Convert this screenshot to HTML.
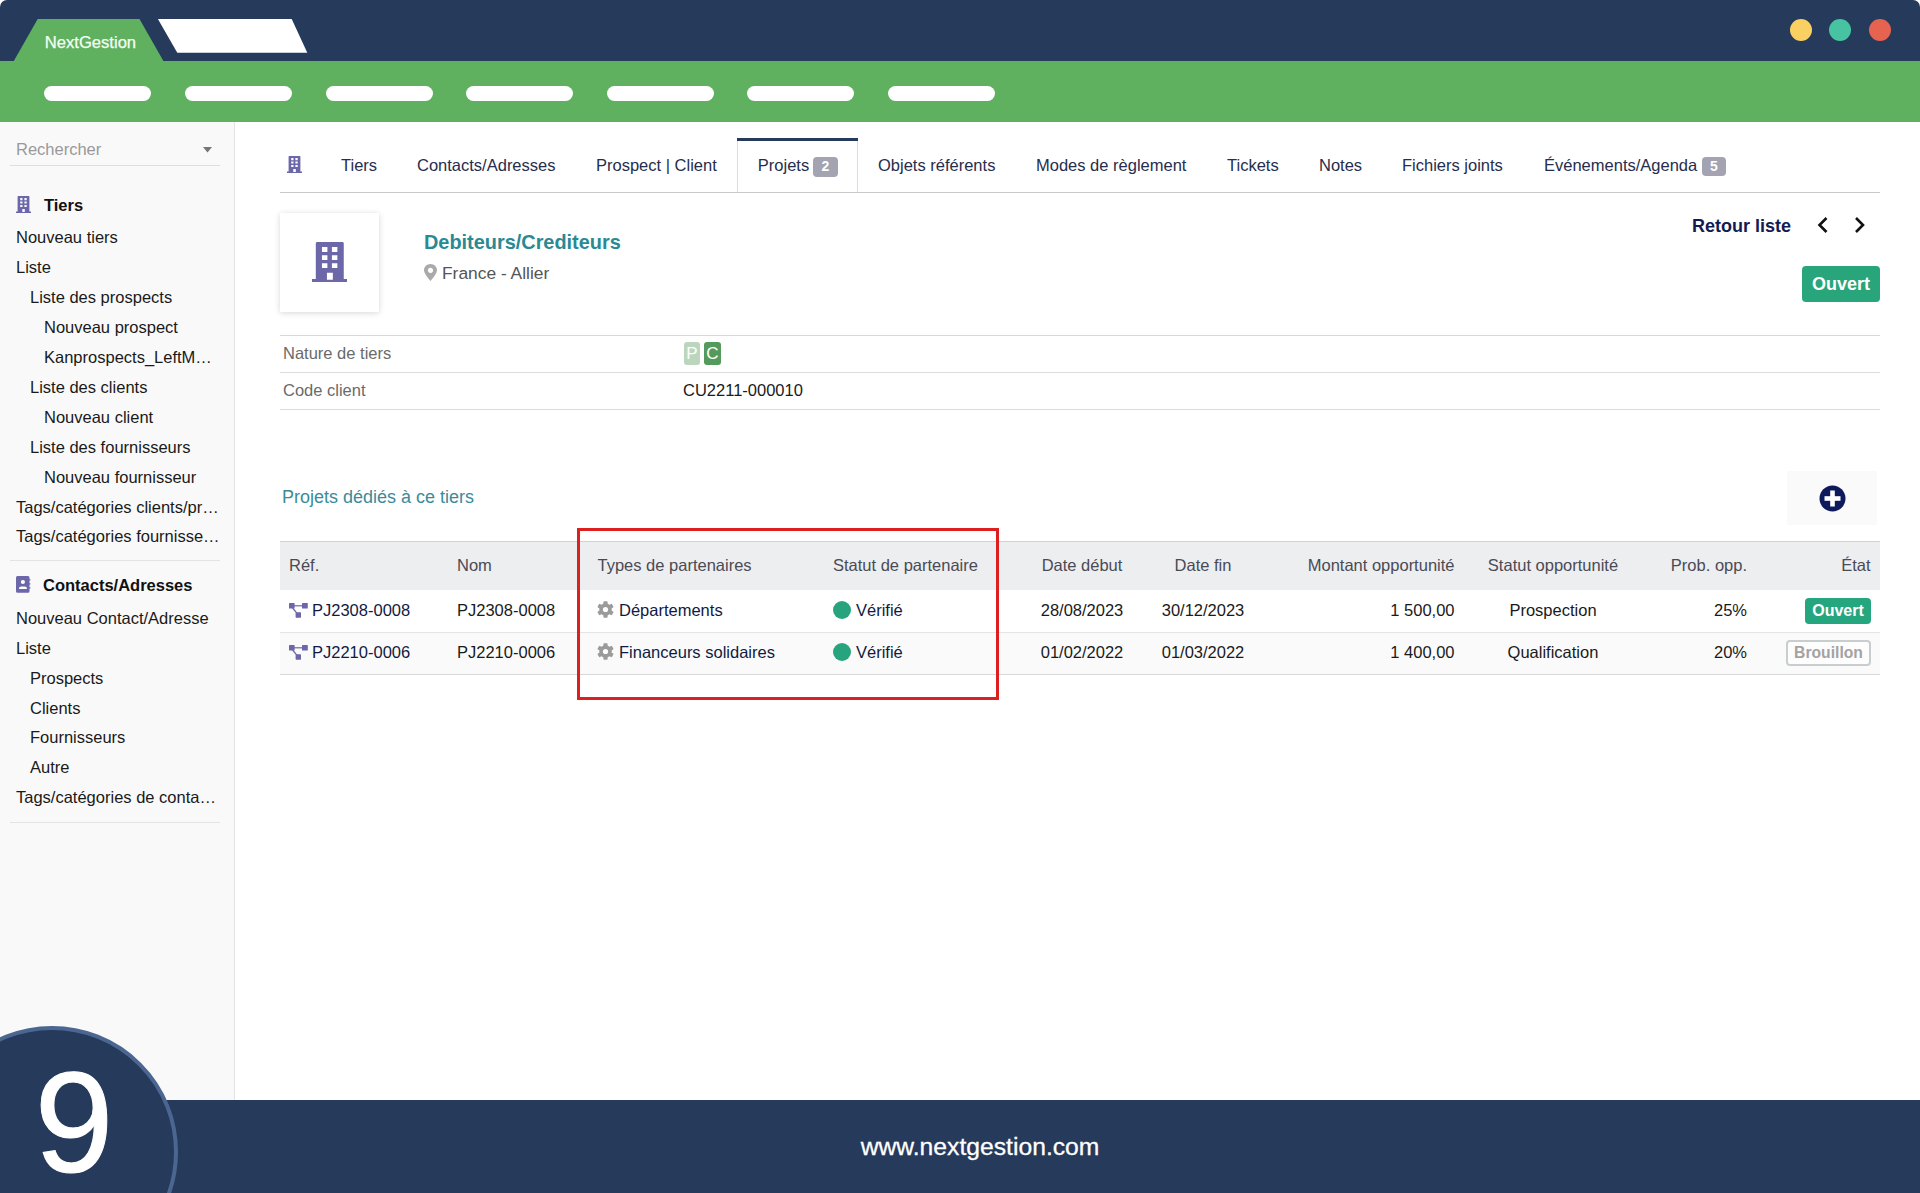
<!DOCTYPE html>
<html><head><meta charset='utf-8'><style>
html,body{margin:0;padding:0;width:1920px;height:1193px;overflow:hidden;background:#fff;position:relative}
.t{position:absolute;white-space:nowrap;line-height:1;font-family:'Liberation Sans', sans-serif}
</style></head><body>
<div style='position:absolute;left:0px;top:0px;width:1920px;height:61px;background:#263a5c;border-radius:7px 7px 0 0'></div>
<svg style='position:absolute;left:0;top:0' width='400' height='62'><polygon points='37.7,18.9 139.5,18.9 163.4,61 13.8,61' fill='#5fb160'/><polygon points='157.9,18.9 291.7,18.9 307.3,52.8 177.3,52.8' fill='#fff'/></svg>
<div class='t' style='left:44.8px;top:34.95px;font-size:16.6px;color:#f4fff4;font-weight:400;-webkit-text-stroke:0.25px #f4fff4'>NextGestion</div>
<div style='position:absolute;left:1789.6px;top:18.8px;width:22.4px;height:22.4px;background:#fbd062;border-radius:50%'></div>
<div style='position:absolute;left:1828.8px;top:18.8px;width:22.4px;height:22.4px;background:#47c3a2;border-radius:50%'></div>
<div style='position:absolute;left:1868.8px;top:18.8px;width:22.4px;height:22.4px;background:#e5634f;border-radius:50%'></div>
<div style='position:absolute;left:0px;top:61px;width:1920px;height:61px;background:#5fb160'></div>
<div style='position:absolute;left:44px;top:86px;width:107px;height:15px;background:#fff;border-radius:8px'></div>
<div style='position:absolute;left:185px;top:86px;width:107px;height:15px;background:#fff;border-radius:8px'></div>
<div style='position:absolute;left:326px;top:86px;width:107px;height:15px;background:#fff;border-radius:8px'></div>
<div style='position:absolute;left:466px;top:86px;width:107px;height:15px;background:#fff;border-radius:8px'></div>
<div style='position:absolute;left:607px;top:86px;width:107px;height:15px;background:#fff;border-radius:8px'></div>
<div style='position:absolute;left:747px;top:86px;width:107px;height:15px;background:#fff;border-radius:8px'></div>
<div style='position:absolute;left:888px;top:86px;width:107px;height:15px;background:#fff;border-radius:8px'></div>
<div style='position:absolute;left:0px;top:122px;width:234px;height:978px;background:#f9f9f9'></div>
<div style='position:absolute;left:234px;top:122px;width:1px;height:978px;background:#e3e3e3'></div>
<div class='t' style='left:16px;top:140.73px;font-size:16.5px;color:#9a9a9a;font-weight:400;'>Rechercher</div>
<svg style='position:absolute;left:203px;top:147px' width='10' height='6'><polygon points='0,0 9,0 4.5,5.5' fill='#777'/></svg>
<div style='position:absolute;left:10px;top:165px;width:210px;height:1px;background:#dedede'></div>
<svg style='position:absolute;left:15.8px;top:196px' width='15' height='17' viewBox='0 0 15 17'><path fill='#6b67a8' d='M1.6,0.6 Q1.6,0 2.2,0 L12.8,0 Q13.4,0 13.4,0.6 L13.4,15.6 L15,15.6 L15,16.9 L0,16.9 L0,15.6 L1.6,15.6 Z M4.2,2.1 L4.2,4.2 L6.5,4.2 L6.5,2.1 Z M8.4,2.1 L8.4,4.2 L10.7,4.2 L10.7,2.1 Z M4.2,5.6 L4.2,7.6 L6.5,7.6 L6.5,5.6 Z M8.4,5.6 L8.4,7.6 L10.7,7.6 L10.7,5.6 Z M4.2,9 L4.2,11 L6.5,11 L6.5,9 Z M8.4,9 L8.4,11 L10.7,11 L10.7,9 Z M6.3,13 L6.3,15.9 L8.8,15.9 L8.8,13 Z'/></svg>
<div class='t' style='left:44px;top:196.63px;font-size:16.5px;color:#111;font-weight:700;'>Tiers</div>
<div class='t' style='left:16px;top:229.03px;font-size:16.5px;color:#1a1a1a;font-weight:400;'>Nouveau tiers</div>
<div class='t' style='left:16px;top:259.03px;font-size:16.5px;color:#1a1a1a;font-weight:400;'>Liste</div>
<div class='t' style='left:30px;top:289.03px;font-size:16.5px;color:#1a1a1a;font-weight:400;'>Liste des prospects</div>
<div class='t' style='left:44px;top:319.03px;font-size:16.5px;color:#1a1a1a;font-weight:400;'>Nouveau prospect</div>
<div class='t' style='left:44px;top:349.03px;font-size:16.5px;color:#1a1a1a;font-weight:400;'>Kanprospects_LeftM…</div>
<div class='t' style='left:30px;top:379.03px;font-size:16.5px;color:#1a1a1a;font-weight:400;'>Liste des clients</div>
<div class='t' style='left:44px;top:409.03px;font-size:16.5px;color:#1a1a1a;font-weight:400;'>Nouveau client</div>
<div class='t' style='left:30px;top:439.03px;font-size:16.5px;color:#1a1a1a;font-weight:400;'>Liste des fournisseurs</div>
<div class='t' style='left:44px;top:469.03px;font-size:16.5px;color:#1a1a1a;font-weight:400;'>Nouveau fournisseur</div>
<div class='t' style='left:16px;top:499.03px;font-size:16.5px;color:#1a1a1a;font-weight:400;'>Tags/catégories clients/pr…</div>
<div class='t' style='left:16px;top:528.03px;font-size:16.5px;color:#1a1a1a;font-weight:400;'>Tags/catégories fournisse…</div>
<div style='position:absolute;left:10px;top:560px;width:210px;height:1px;background:#e3e3e3'></div>
<svg style='position:absolute;left:16px;top:576px' width='15' height='17' viewBox='0 0 15 17'><path fill='#6b67a8' d='M1.5,0 L12,0 Q13.5,0 13.5,1.5 L13.5,3.2 L14.4,3.2 L14.4,4.6 L13.5,4.6 L13.5,7.2 L14.4,7.2 L14.4,8.6 L13.5,8.6 L13.5,11.2 L14.4,11.2 L14.4,12.6 L13.5,12.6 L13.5,15.3 Q13.5,16.8 12,16.8 L1.5,16.8 Q0,16.8 0,15.3 L0,1.5 Q0,0 1.5,0 Z'/><circle cx='6.9' cy='6' r='2.1' fill='#fff'/><path d='M3,13.1 L3,12.3 Q3,10.4 5.2,10.4 L8.7,10.4 Q10.9,10.4 10.9,12.3 L10.9,13.1 Z' fill='#fff'/></svg>
<div class='t' style='left:43px;top:577.03px;font-size:16.5px;color:#111;font-weight:700;'>Contacts/Adresses</div>
<div class='t' style='left:16px;top:610.43px;font-size:16.5px;color:#1a1a1a;font-weight:400;'>Nouveau Contact/Adresse</div>
<div class='t' style='left:16px;top:640.13px;font-size:16.5px;color:#1a1a1a;font-weight:400;'>Liste</div>
<div class='t' style='left:30px;top:669.83px;font-size:16.5px;color:#1a1a1a;font-weight:400;'>Prospects</div>
<div class='t' style='left:30px;top:699.53px;font-size:16.5px;color:#1a1a1a;font-weight:400;'>Clients</div>
<div class='t' style='left:30px;top:729.23px;font-size:16.5px;color:#1a1a1a;font-weight:400;'>Fournisseurs</div>
<div class='t' style='left:30px;top:758.93px;font-size:16.5px;color:#1a1a1a;font-weight:400;'>Autre</div>
<div class='t' style='left:16px;top:788.63px;font-size:16.5px;color:#1a1a1a;font-weight:400;'>Tags/catégories de conta…</div>
<div style='position:absolute;left:10px;top:822px;width:210px;height:1px;background:#e3e3e3'></div>
<div style='position:absolute;left:737px;top:139px;width:121px;height:54px;background:#fff;border-left:1px solid #dcdcdc;border-right:1px solid #dcdcdc;box-sizing:border-box'></div>
<div style='position:absolute;left:737px;top:138px;width:121px;height:3px;background:#263a5c'></div>
<svg style='position:absolute;left:286.8px;top:156px' width='15.0' height='17.0' viewBox='0 0 15 17'><path fill='#6b67a8' d='M1.6,0.6 Q1.6,0 2.2,0 L12.8,0 Q13.4,0 13.4,0.6 L13.4,15.6 L15,15.6 L15,16.9 L0,16.9 L0,15.6 L1.6,15.6 Z M4.2,2.1 L4.2,4.2 L6.5,4.2 L6.5,2.1 Z M8.4,2.1 L8.4,4.2 L10.7,4.2 L10.7,2.1 Z M4.2,5.6 L4.2,7.6 L6.5,7.6 L6.5,5.6 Z M8.4,5.6 L8.4,7.6 L10.7,7.6 L10.7,5.6 Z M4.2,9 L4.2,11 L6.5,11 L6.5,9 Z M8.4,9 L8.4,11 L10.7,11 L10.7,9 Z M6.3,13 L6.3,15.9 L8.8,15.9 L8.8,13 Z'/></svg>
<div class='t' style='left:341px;top:156.83px;font-size:16.5px;color:#262d4d;font-weight:400;'>Tiers</div>
<div class='t' style='left:417px;top:156.83px;font-size:16.5px;color:#262d4d;font-weight:400;'>Contacts/Adresses</div>
<div class='t' style='left:596px;top:156.83px;font-size:16.5px;color:#262d4d;font-weight:400;'>Prospect | Client</div>
<div class='t' style='left:757.8px;top:156.83px;font-size:16.5px;color:#262d4d;font-weight:400;'>Projets</div>
<div class='t' style='left:878px;top:156.83px;font-size:16.5px;color:#262d4d;font-weight:400;'>Objets référents</div>
<div class='t' style='left:1036px;top:156.83px;font-size:16.5px;color:#262d4d;font-weight:400;'>Modes de règlement</div>
<div class='t' style='left:1227px;top:156.83px;font-size:16.5px;color:#262d4d;font-weight:400;'>Tickets</div>
<div class='t' style='left:1319px;top:156.83px;font-size:16.5px;color:#262d4d;font-weight:400;'>Notes</div>
<div class='t' style='left:1402px;top:156.83px;font-size:16.5px;color:#262d4d;font-weight:400;'>Fichiers joints</div>
<div class='t' style='left:1544px;top:156.83px;font-size:16.5px;color:#262d4d;font-weight:400;'>Événements/Agenda</div>
<div style='position:absolute;left:280px;top:192px;width:1600px;height:1px;background:#c9c9c9'></div>
<div style='position:absolute;left:813px;top:157px;width:25px;height:19.5px;background:#a3a3b2;border-radius:4px'></div>
<div class='t' style='left:813px;width:25px;text-align:center;top:158px;font-size:14px;line-height:17px;color:#fff;font-weight:700'>2</div>
<div style='position:absolute;left:1702px;top:157px;width:24px;height:19px;background:#a3a3b2;border-radius:4px'></div>
<div class='t' style='left:1702px;width:24px;text-align:center;top:158px;font-size:14px;line-height:17px;color:#fff;font-weight:700'>5</div>
<div style='position:absolute;left:280px;top:213px;width:99px;height:99px;background:#fff;box-shadow:0 1px 6px rgba(0,0,0,0.16)'></div>
<svg style='position:absolute;left:311.7px;top:242.1px' width='35.550000000000004' height='40.29' viewBox='0 0 15 17'><path fill='#6b67a8' d='M1.6,0.6 Q1.6,0 2.2,0 L12.8,0 Q13.4,0 13.4,0.6 L13.4,15.6 L15,15.6 L15,16.9 L0,16.9 L0,15.6 L1.6,15.6 Z M4.2,2.1 L4.2,4.2 L6.5,4.2 L6.5,2.1 Z M8.4,2.1 L8.4,4.2 L10.7,4.2 L10.7,2.1 Z M4.2,5.6 L4.2,7.6 L6.5,7.6 L6.5,5.6 Z M8.4,5.6 L8.4,7.6 L10.7,7.6 L10.7,5.6 Z M4.2,9 L4.2,11 L6.5,11 L6.5,9 Z M8.4,9 L8.4,11 L10.7,11 L10.7,9 Z M6.3,13 L6.3,15.9 L8.8,15.9 L8.8,13 Z'/></svg>
<div class='t' style='left:424px;top:232.95px;font-size:19.9px;color:#2a8a93;font-weight:700;'>Debiteurs/Crediteurs</div>
<svg style='position:absolute;left:423.8px;top:264px' width='13' height='17' viewBox='0 0 13 17'><path fill='#aaa' d='M6.5,0 C2.9,0 0,2.8 0,6.3 C0,10 6.5,17 6.5,17 C6.5,17 13,10 13,6.3 C13,2.8 10.1,0 6.5,0 Z M6.5,3.8 A2.6,2.6 0 1 1 6.49,3.8 Z'/></svg>
<div class='t' style='left:442px;top:264.77px;font-size:17.4px;color:#555;font-weight:400;'>France - Allier</div>
<div class='t' style='left:1692px;top:217.36px;font-size:18px;color:#141b52;font-weight:700;'>Retour liste</div>
<svg style='position:absolute;left:1815px;top:215px' width='56' height='20'><path d='M11.5,3 L4.5,10 L11.5,17' stroke='#111' stroke-width='2.6' fill='none'/><path d='M41,3 L48,10 L41,17' stroke='#111' stroke-width='2.6' fill='none'/></svg>
<div style='position:absolute;left:1802px;top:266px;width:78px;height:36px;background:#28a57b;border-radius:4px'></div>
<div class='t' style='left:1811.9px;top:274.76px;font-size:18px;color:#fff;font-weight:700;'>Ouvert</div>
<div style='position:absolute;left:280px;top:335px;width:1600px;height:1px;background:#d8d8d8'></div>
<div class='t' style='left:283px;top:345.33px;font-size:16.5px;color:#6a6a6a;font-weight:400;'>Nature de tiers</div>
<div style='position:absolute;left:684px;top:342px;width:16px;height:23px;background:#bcd6be;border-radius:3px'></div>
<div style='position:absolute;left:704px;top:342px;width:17px;height:23px;background:#559a5d;border-radius:3px'></div>
<div class='t' style='left:684px;width:16px;text-align:center;top:342px;font-size:17px;line-height:23px;color:#fff'>P</div>
<div class='t' style='left:704px;width:17px;text-align:center;top:342px;font-size:17px;line-height:23px;color:#fff'>C</div>
<div style='position:absolute;left:280px;top:372px;width:1600px;height:1px;background:#dcdcdc'></div>
<div class='t' style='left:283px;top:382.03px;font-size:16.5px;color:#6a6a6a;font-weight:400;'>Code client</div>
<div class='t' style='left:683px;top:382.03px;font-size:16.5px;color:#1a1a1a;font-weight:400;'>CU2211-000010</div>
<div style='position:absolute;left:280px;top:409px;width:1600px;height:1px;background:#dcdcdc'></div>
<div class='t' style='left:282px;top:488.06px;font-size:18px;color:#3b8b99;font-weight:400;'>Projets dédiés à ce tiers</div>
<div style='position:absolute;left:1787px;top:471px;width:90px;height:54px;background:#fafafa'></div>
<svg style='position:absolute;left:1819px;top:485px' width='27' height='27' viewBox='0 0 27 27'><circle cx='13.5' cy='13.5' r='13' fill='#0e1a5c'/><rect x='11.2' y='5.5' width='4.6' height='16' fill='#fff'/><rect x='5.5' y='11.2' width='16' height='4.6' fill='#fff'/></svg>
<div style='position:absolute;left:280px;top:541px;width:1600px;height:1px;background:#d2d2d2'></div>
<div style='position:absolute;left:280px;top:542px;width:1600px;height:48px;background:#edeef0'></div>
<div style='position:absolute;left:280px;top:632px;width:1600px;height:1px;background:#e4e4e4'></div>
<div style='position:absolute;left:280px;top:633px;width:1600px;height:41px;background:#fafafa'></div>
<div style='position:absolute;left:280px;top:674px;width:1600px;height:1px;background:#d8d8d8'></div>
<div class='t' style='left:289px;top:557.28px;font-size:16.5px;color:#4a4a55;font-weight:400;'>Réf.</div>
<div class='t' style='left:457px;top:557.28px;font-size:16.5px;color:#4a4a55;font-weight:400;'>Nom</div>
<div class='t' style='left:597.5px;top:557.28px;font-size:16.5px;color:#4a4a55;font-weight:400;'>Types de partenaires</div>
<div class='t' style='left:833px;top:557.28px;font-size:16.5px;color:#4a4a55;font-weight:400;'>Statut de partenaire</div>
<div class='t' style='left:782px;width:600px;text-align:center;top:557.28px;font-size:16.5px;color:#4a4a55;font-weight:400;'>Date début</div>
<div class='t' style='left:903px;width:600px;text-align:center;top:557.28px;font-size:16.5px;color:#4a4a55;font-weight:400;'>Date fin</div>
<div class='t' style='right:465.5px;top:557.28px;font-size:16.5px;color:#4a4a55;font-weight:400;'>Montant opportunité</div>
<div class='t' style='left:1253px;width:600px;text-align:center;top:557.28px;font-size:16.5px;color:#4a4a55;font-weight:400;'>Statut opportunité</div>
<div class='t' style='right:173px;top:557.28px;font-size:16.5px;color:#4a4a55;font-weight:400;'>Prob. opp.</div>
<div class='t' style='right:49.5px;top:557.28px;font-size:16.5px;color:#4a4a55;font-weight:400;'>État</div>
<svg style='position:absolute;left:289px;top:603.0px' width='19' height='15' viewBox='0 0 19 15'><rect x='0' y='0' width='5.6' height='5.6' rx='0.6' fill='#6b67a8'/><rect x='13' y='0' width='5.8' height='5.6' rx='0.6' fill='#6b67a8'/><rect x='6.6' y='9.3' width='5.4' height='5.4' rx='0.6' fill='#6b67a8'/><rect x='5' y='2.2' width='8' height='1.2' fill='#6b67a8'/><path d='M3.6,5 L7.6,9.8' stroke='#6b67a8' stroke-width='1.3'/></svg>
<div class='t' style='left:312px;top:602.28px;font-size:16.5px;color:#111a44;font-weight:400;'>PJ2308-0008</div>
<div class='t' style='left:457px;top:602.28px;font-size:16.5px;color:#1a1a1a;font-weight:400;'>PJ2308-0008</div>
<svg style='position:absolute;left:596.5px;top:601.0px' width='17' height='17' viewBox='-8.5 -8.5 17 17'><g fill='#9b9b9b'><circle r='6.2'/><rect x='-2.1' y='-8.3' width='4.2' height='4' rx='0.8' transform='rotate(0)'/><rect x='-2.1' y='-8.3' width='4.2' height='4' rx='0.8' transform='rotate(60)'/><rect x='-2.1' y='-8.3' width='4.2' height='4' rx='0.8' transform='rotate(120)'/><rect x='-2.1' y='-8.3' width='4.2' height='4' rx='0.8' transform='rotate(180)'/><rect x='-2.1' y='-8.3' width='4.2' height='4' rx='0.8' transform='rotate(240)'/><rect x='-2.1' y='-8.3' width='4.2' height='4' rx='0.8' transform='rotate(300)'/></g><circle r='2.6' fill='#fff'/></svg>
<div class='t' style='left:619px;top:602.28px;font-size:16.5px;color:#111a44;font-weight:400;'>Départements</div>
<div style='position:absolute;left:832.8px;top:600.65px;width:18.4px;height:18.4px;background:#27a47d;border-radius:50%'></div>
<div class='t' style='left:856px;top:602.28px;font-size:16.5px;color:#111a44;font-weight:400;'>Vérifié</div>
<div class='t' style='left:782px;width:600px;text-align:center;top:602.28px;font-size:16.5px;color:#1a1a1a;font-weight:400;'>28/08/2023</div>
<div class='t' style='left:903px;width:600px;text-align:center;top:602.28px;font-size:16.5px;color:#1a1a1a;font-weight:400;'>30/12/2023</div>
<div class='t' style='right:465.5px;top:602.28px;font-size:16.5px;color:#1a1a1a;font-weight:400;'>1 500,00</div>
<div class='t' style='left:1253px;width:600px;text-align:center;top:602.28px;font-size:16.5px;color:#1a1a1a;font-weight:400;'>Prospection</div>
<div class='t' style='right:173px;top:602.28px;font-size:16.5px;color:#1a1a1a;font-weight:400;'>25%</div>
<div style='position:absolute;left:1805px;top:598px;width:66px;height:26px;background:#26a67e;border-radius:4px'></div>
<div class='t' style='left:1805px;width:66px;text-align:center;top:598px;font-size:16px;line-height:26px;color:#fff;font-weight:700'>Ouvert</div>
<svg style='position:absolute;left:289px;top:644.75px' width='19' height='15' viewBox='0 0 19 15'><rect x='0' y='0' width='5.6' height='5.6' rx='0.6' fill='#6b67a8'/><rect x='13' y='0' width='5.8' height='5.6' rx='0.6' fill='#6b67a8'/><rect x='6.6' y='9.3' width='5.4' height='5.4' rx='0.6' fill='#6b67a8'/><rect x='5' y='2.2' width='8' height='1.2' fill='#6b67a8'/><path d='M3.6,5 L7.6,9.8' stroke='#6b67a8' stroke-width='1.3'/></svg>
<div class='t' style='left:312px;top:644.03px;font-size:16.5px;color:#111a44;font-weight:400;'>PJ2210-0006</div>
<div class='t' style='left:457px;top:644.03px;font-size:16.5px;color:#1a1a1a;font-weight:400;'>PJ2210-0006</div>
<svg style='position:absolute;left:596.5px;top:642.75px' width='17' height='17' viewBox='-8.5 -8.5 17 17'><g fill='#9b9b9b'><circle r='6.2'/><rect x='-2.1' y='-8.3' width='4.2' height='4' rx='0.8' transform='rotate(0)'/><rect x='-2.1' y='-8.3' width='4.2' height='4' rx='0.8' transform='rotate(60)'/><rect x='-2.1' y='-8.3' width='4.2' height='4' rx='0.8' transform='rotate(120)'/><rect x='-2.1' y='-8.3' width='4.2' height='4' rx='0.8' transform='rotate(180)'/><rect x='-2.1' y='-8.3' width='4.2' height='4' rx='0.8' transform='rotate(240)'/><rect x='-2.1' y='-8.3' width='4.2' height='4' rx='0.8' transform='rotate(300)'/></g><circle r='2.6' fill='#fff'/></svg>
<div class='t' style='left:619px;top:644.03px;font-size:16.5px;color:#111a44;font-weight:400;'>Financeurs solidaires</div>
<div style='position:absolute;left:832.8px;top:642.6999999999999px;width:18.4px;height:18.4px;background:#27a47d;border-radius:50%'></div>
<div class='t' style='left:856px;top:644.03px;font-size:16.5px;color:#111a44;font-weight:400;'>Vérifié</div>
<div class='t' style='left:782px;width:600px;text-align:center;top:644.03px;font-size:16.5px;color:#1a1a1a;font-weight:400;'>01/02/2022</div>
<div class='t' style='left:903px;width:600px;text-align:center;top:644.03px;font-size:16.5px;color:#1a1a1a;font-weight:400;'>01/03/2022</div>
<div class='t' style='right:465.5px;top:644.03px;font-size:16.5px;color:#1a1a1a;font-weight:400;'>1 400,00</div>
<div class='t' style='left:1253px;width:600px;text-align:center;top:644.03px;font-size:16.5px;color:#1a1a1a;font-weight:400;'>Qualification</div>
<div class='t' style='right:173px;top:644.03px;font-size:16.5px;color:#1a1a1a;font-weight:400;'>20%</div>
<div style='position:absolute;left:1786px;top:640px;width:85px;height:26px;border:2px solid #c8cdcd;border-radius:4px;box-sizing:border-box;background:#fdfdfd'></div>
<div class='t' style='left:1786px;width:85px;text-align:center;top:640.3px;font-size:15.7px;line-height:26px;color:#a3a3a3;font-weight:700'>Brouillon</div>
<div style='position:absolute;left:577px;top:528px;width:422px;height:172px;border:3px solid #dc1f1f;box-sizing:border-box'></div>
<div style='position:absolute;left:0px;top:1100px;width:1920px;height:93px;background:#263a5c'></div>
<div class='t' style='left:680px;width:600px;text-align:center;top:1135.39px;font-size:24.7px;color:#fff;font-weight:400;-webkit-text-stroke:0.3px #fff'>www.nextgestion.com</div>
<div style='position:absolute;left:-74.2px;top:1025.8px;width:252.4px;height:252.4px;border-radius:50%;background:#263a5c;border:4px solid #4b6690;box-sizing:border-box'></div>
<div class='t' style='left:34.5px;top:1052.30px;font-size:142px;color:#fff;font-weight:400;-webkit-text-stroke:1px #fff'>9</div>
</body></html>
